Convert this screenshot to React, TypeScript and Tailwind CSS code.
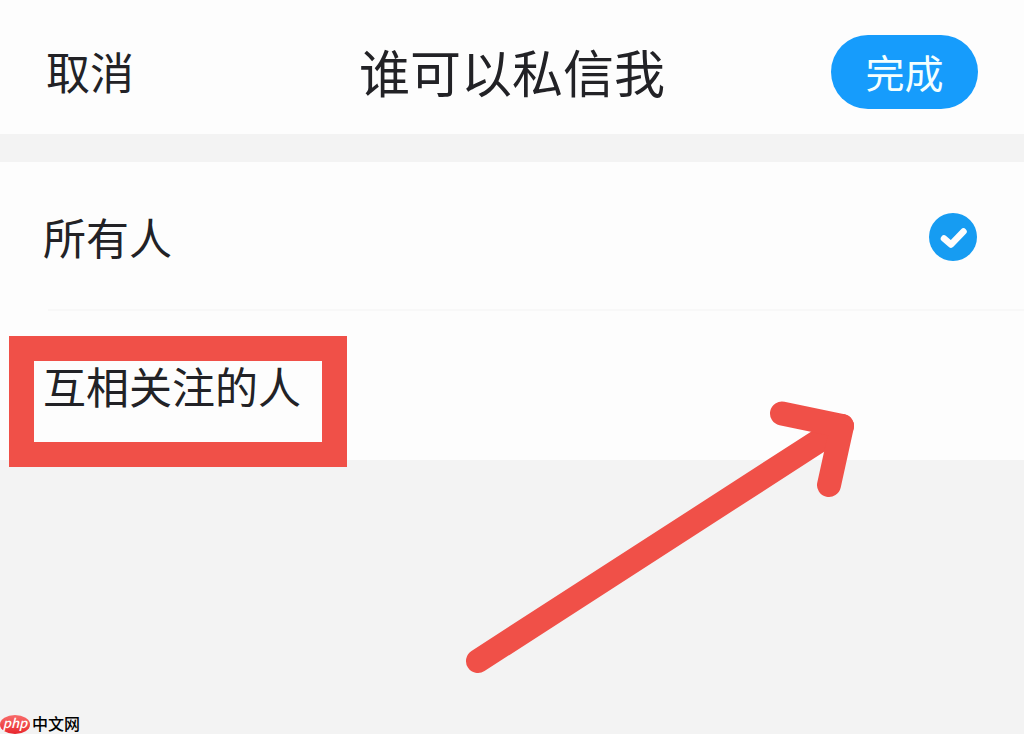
import { useState } from 'react';

interface Option {
  value: string;
  label: string;
  highlighted?: boolean;
}

const options: Option[] = [
  { value: 'everyone', label: '所有人' },
  { value: 'mutual', label: '互相关注的人', highlighted: true },
];

function CheckMark() {
  return (
    <svg
      viewBox="0 0 48 48"
      className="col-start-1 row-start-1 w-12 h-12 pointer-events-none"
      fill="none"
      stroke="#fdfdfd"
      strokeWidth="6.5"
      strokeLinecap="round"
      strokeLinejoin="round"
      aria-hidden="true"
    >
      <path d="M15 25.5l7 6L34.5 18.5" />
    </svg>
  );
}

function Arrow() {
  return (
    <svg
      viewBox="0 0 390 273"
      className="absolute left-[465px] top-[401px] w-[390px] h-[273px] pointer-events-none"
      fill="none"
      stroke="#f05048"
      strokeWidth="24"
      strokeLinecap="round"
      strokeLinejoin="round"
      aria-hidden="true"
    >
      <path d="M13 260L377 25" />
      <path d="M317 12.5L377 25L364 84" />
    </svg>
  );
}

export default function App() {
  const [selected, setSelected] = useState('everyone');

  return (
    <div className="relative min-h-screen flex flex-col bg-[#f3f3f3] text-[#222226] font-['Noto_Sans_CJK_SC','Liberation_Sans',sans-serif]">
      {/* Header */}
      <header className="grid grid-cols-[1fr_auto_1fr] items-center pt-2.5 px-[46px] h-[134px] bg-[#fdfdfd]">
        <button type="button" className="justify-self-start pb-0.5 text-[44px] leading-[64px]">
          取消
        </button>
        <h1 className="pb-0.5 text-[51px] leading-[64px]">谁可以私信我</h1>
        <button
          type="button"
          className="justify-self-end w-[147px] h-[74px] pb-0.5 rounded-full bg-[#169cfc] text-[39px] leading-[64px] text-[#f4fffe]"
        >
          完成
        </button>
      </header>

      {/* Options */}
      <fieldset className="mt-7 bg-[#fdfdfd]" aria-label="谁可以私信我">
        {options.map((option) => (
          <label
            key={option.value}
            className="group relative flex items-center justify-between h-[149px] pl-[43px] pr-[47px] cursor-pointer"
          >
            <span className="pb-0.5 text-[43px] leading-[64px]">{option.label}</span>
            <span className="grid place-items-center">
              <input
                type="radio"
                name="message-permission"
                value={option.value}
                checked={selected === option.value}
                onChange={() => setSelected(option.value)}
                className="col-start-1 row-start-1 appearance-none w-12 h-12 rounded-full checked:bg-[#169cf2]"
              />
              {selected === option.value && <CheckMark />}
            </span>
            <span className="absolute left-12 right-0 bottom-0 h-0.5 bg-[#f8f8f8] group-last:hidden" />
            {option.highlighted && (
              <span className="absolute left-[9px] top-[25px] w-[338px] h-[131px] border-25 border-[#f05048] pointer-events-none" />
            )}
          </label>
        ))}
      </fieldset>

      <Arrow />

      {/* Site mark */}
      <footer className="mt-auto flex items-center gap-0.5 h-5">
        <span className="flex items-center justify-center w-[30px] h-[19px] rounded-[50%] bg-linear-to-b from-[#f86a6a] to-[#e8222c] text-white text-[13px] leading-4 italic font-medium pb-0.5">
          php
        </span>
        <span className="pb-0.5 text-[16px] leading-5 font-medium text-black">中文网</span>
      </footer>
    </div>
  );
}
